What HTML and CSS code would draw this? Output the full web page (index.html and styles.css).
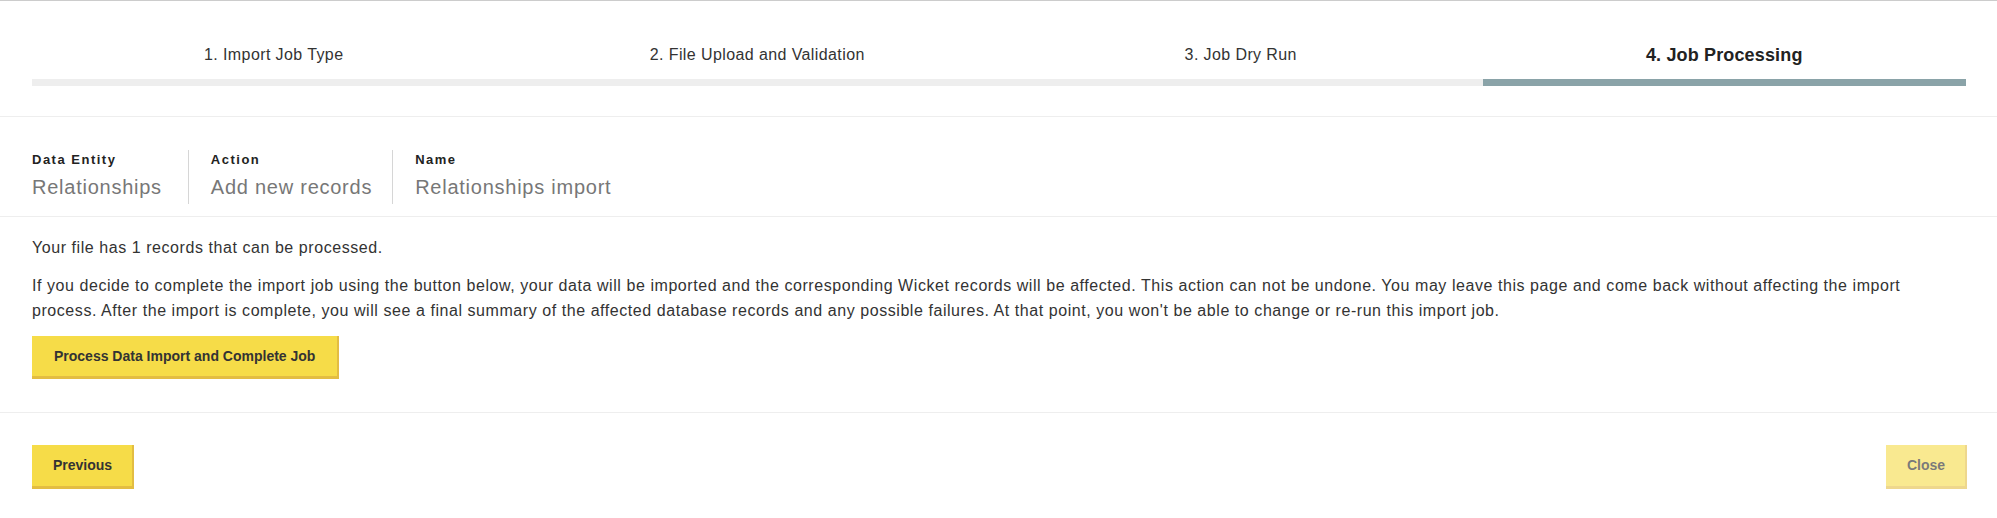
FILE: index.html
```html
<!DOCTYPE html>
<html lang="en">
<head>
<meta charset="utf-8">
<title>Import Job - Job Processing</title>
<link rel="stylesheet" href="styles.css">
</head>
<body>
<div class="page">
  <div class="steps">
    <div class="step">
      <div class="step-label">1. Import Job Type</div>
      <div class="step-bar"></div>
    </div>
    <div class="step">
      <div class="step-label">2. File Upload and Validation</div>
      <div class="step-bar"></div>
    </div>
    <div class="step">
      <div class="step-label">3. Job Dry Run</div>
      <div class="step-bar"></div>
    </div>
    <div class="step step-active">
      <div class="step-label">4. Job Processing</div>
      <div class="step-bar"></div>
    </div>
  </div>

  <div class="summary">
    <div class="field">
      <div class="field-label">Data Entity</div>
      <div class="field-value">Relationships</div>
    </div>
    <div class="field">
      <div class="field-label">Action</div>
      <div class="field-value">Add new records</div>
    </div>
    <div class="field">
      <div class="field-label">Name</div>
      <div class="field-value">Relationships import</div>
    </div>
  </div>

  <div class="content">
    <p class="text">Your file has 1 records that can be processed.</p>
    <p class="text">If you decide to complete the import job using the button below, your data will be imported and the corresponding Wicket records will be affected. This action can not be undone. You may leave this page and come back without affecting the import process. After the import is complete, you will see a final summary of the affected database records and any possible failures. At that point, you won't be able to change or re-run this import job.</p>
    <button class="btn" type="button">Process Data Import and Complete Job</button>
  </div>

  <div class="footer">
    <button class="btn" type="button">Previous</button>
    <button class="btn btn-disabled" type="button" disabled>Close</button>
  </div>
</div>
</body>
</html>
```

FILE: styles.css
```css
* {
  box-sizing: border-box;
}

html, body {
  margin: 0;
  padding: 0;
  background: #ffffff;
}

body {
  font-family: "Liberation Sans", Arial, sans-serif;
  color: #333333;
}

.page {
  border-top: 1px solid #cccccc;
}

/* Steps */
.steps {
  display: grid;
  grid-template-columns: repeat(4, 1fr);
  padding: 43px 31px 30px 32px;
  border-bottom: 1px solid #eeeeee;
}

.step {
  display: flex;
  flex-direction: column;
  align-items: stretch;
}

.step-label {
  text-align: center;
  font-size: 16px;
  line-height: 22px;
  letter-spacing: 0.4px;
  color: #333333;
}

.step-bar {
  margin-top: 13px;
  height: 7px;
  background: #eeeeee;
}

.step-active .step-label {
  font-size: 18px;
  font-weight: 600;
  color: #222222;
  letter-spacing: 0.15px;
}

.step-active .step-bar {
  background: #8aa3a8;
}

/* Summary */
.summary {
  display: flex;
  padding: 33px 32px 12px 32px;
  border-bottom: 1px solid #eeeeee;
}

.field {
  padding: 2px 20px 5px 22px;
  border-left: 1px solid #d6d6d6;
}

.field:first-child {
  padding-left: 0;
  padding-right: 26px;
  border-left: none;
}

.field-label {
  font-size: 13px;
  line-height: 16px;
  font-weight: 700;
  letter-spacing: 1.5px;
  color: #222222;
}

.field-value {
  margin-top: 7px;
  font-size: 20px;
  line-height: 24px;
  letter-spacing: 0.75px;
  color: #777777;
}

/* Content */
.content {
  padding: 18px 32px 33px 32px;
  border-bottom: 1px solid #eeeeee;
}

.text {
  margin: 0 0 12px 0;
  font-size: 16px;
  line-height: 25.6px;
  letter-spacing: 0.56px;
  color: #333333;
}

.btn {
  display: inline-block;
  height: 43px;
  padding: 0 22px 0 22px;
  background: #f6dc48;
  border: none;
  border-right: 2px solid #e3bd42;
  border-bottom: 3px solid #e3bd42;
  border-radius: 0;
  font-family: "Liberation Sans", Arial, sans-serif;
  font-size: 14px;
  font-weight: 700;
  color: #333333;
  cursor: pointer;
}

/* Footer */
.footer {
  display: flex;
  justify-content: space-between;
  align-items: center;
  padding: 32px 30px 32px 32px;
}

.footer .btn {
  height: 44px;
  padding: 0 20px 0 21px;
}

.btn-disabled {
  opacity: 0.6;
  color: #222222;
  cursor: default;
}
```
